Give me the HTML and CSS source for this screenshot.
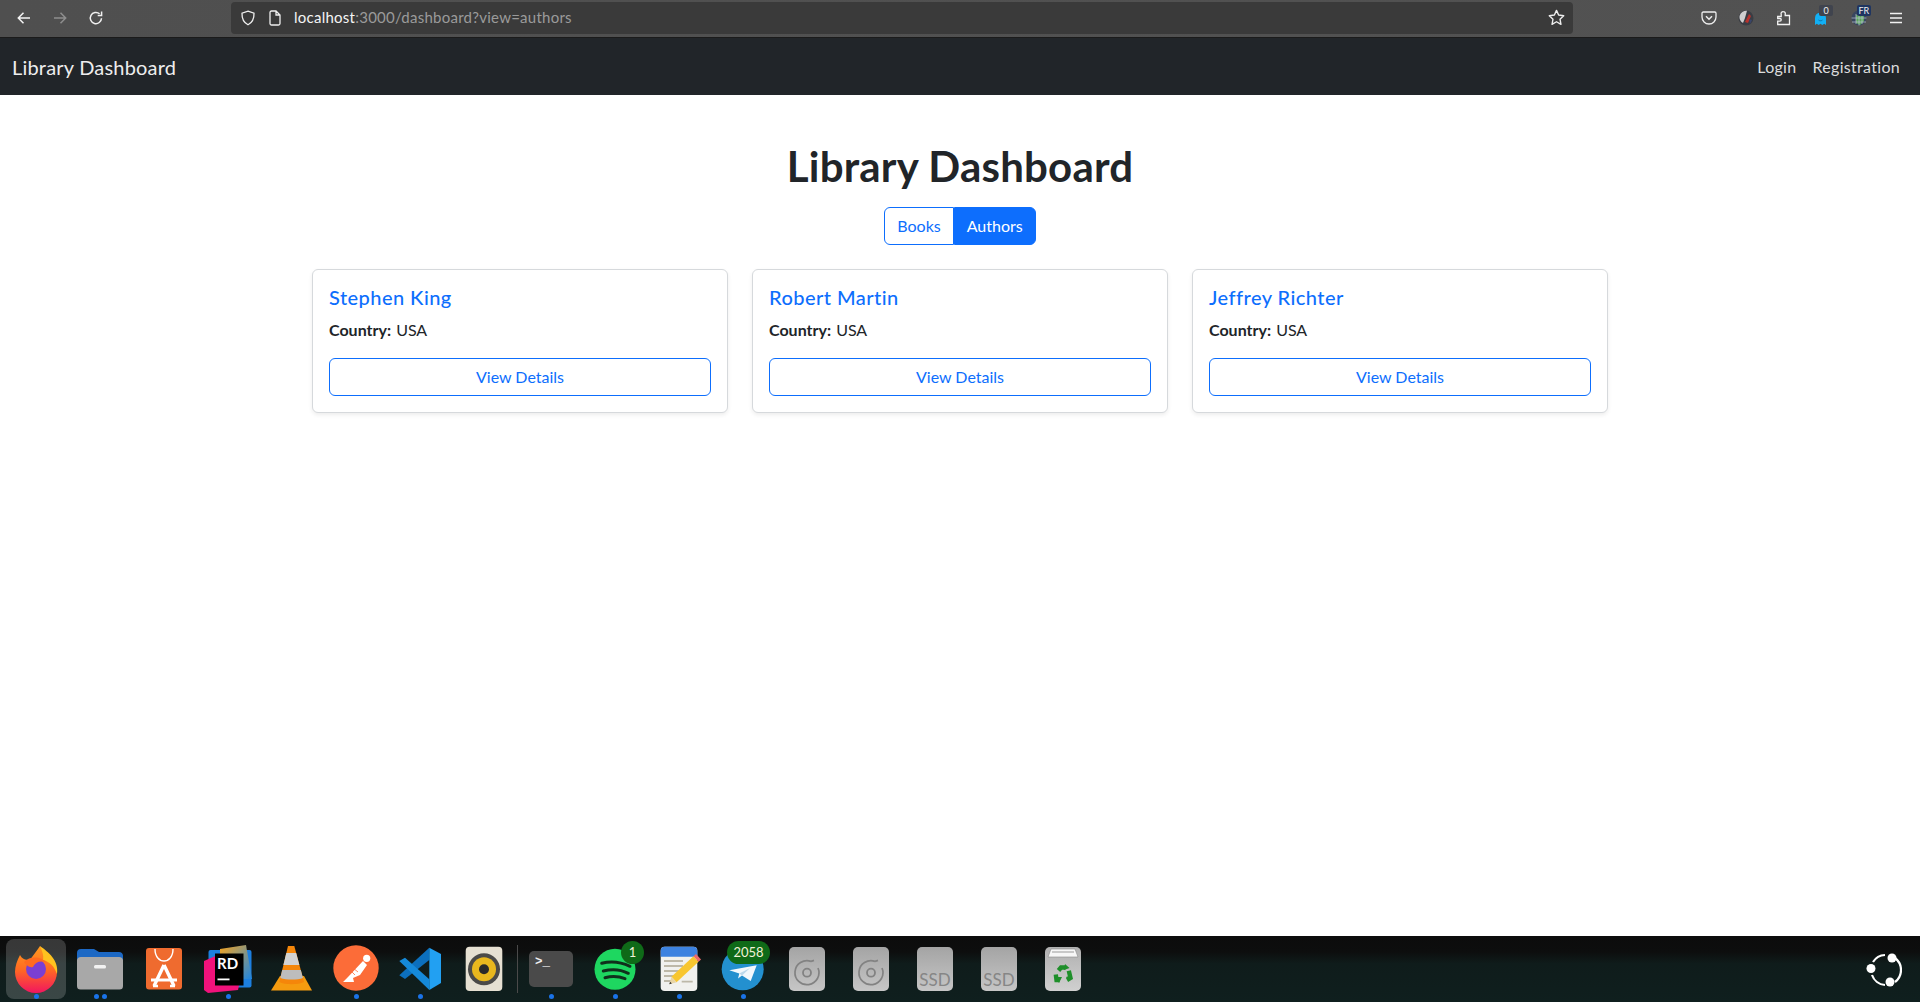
FILE: index.html
```html
<!DOCTYPE html>
<html lang="en">
<head>
<meta charset="utf-8">
<title>Library Dashboard</title>
<link rel="stylesheet" href="styles.css">
</head>
<body>
<div class="toolbar">
  <div class="nav-buttons">
    <svg class="tb-icon" viewBox="0 0 16 16"><path d="M14 8H2.500M7.500 2.800 2.300 8l5.200 5.200" fill="none" stroke="#f4f4f4" stroke-width="1.500"/></svg>
    <svg class="tb-icon" viewBox="0 0 16 16"><path d="M2 8h11.500M8.500 2.800 13.700 8l-5.200 5.200" fill="none" stroke="#8e8e8e" stroke-width="1.500"/></svg>
    <svg class="tb-icon" viewBox="0 0 16 16"><path d="M13.500 8.200A5.600 5.600 0 1 1 11.600 3.800M13.600 1.600v3.900H9.700" fill="none" stroke="#f0f0f0" stroke-width="1.500"/></svg>
  </div>
  <div class="urlbar">
    <svg class="url-icon" viewBox="0 0 16 16"><path d="M8 1.200 14 3.200c.2 5.400-1.900 9.400-6 11.600C3.900 12.600 1.800 8.600 2 3.200Z" fill="none" stroke="#eee" stroke-width="1.300"/></svg>
    <svg class="url-icon" viewBox="0 0 16 16"><path d="M3 2.500A1.500 1.500 0 0 1 4.500 1H9l4 4v8.500a1.500 1.500 0 0 1-1.500 1.500h-7A1.500 1.500 0 0 1 3 13.500ZM9 1v4h4" fill="none" stroke="#eee" stroke-width="1.300"/></svg>
    <span class="url-text"><span class="url-host">localhost</span>:3000/dashboard?view=authors</span>
    <svg class="star" viewBox="0 0 16 16"><path d="m8 1.300 2 4.400 4.800.6-3.500 3.300.9 4.800L8 12l-4.200 2.400.9-4.800L1.200 6.300 6 5.700Z" fill="none" stroke="#eee" stroke-width="1.300" stroke-linejoin="round"/></svg>
  </div>
  <div class="ext-icons">
    <svg class="ext" viewBox="0 0 16 16"><path d="M2.200 2h11.600c.7 0 1.200.5 1.200 1.200V7a7 7 0 0 1-14 0V3.200C1 2.500 1.500 2 2.200 2Z" fill="none" stroke="#eee" stroke-width="1.300"/><path d="m5 6.200 3 3 3-3" fill="none" stroke="#eee" stroke-width="1.500"/></svg>
    <svg class="ext" viewBox="0 0 16 16"><circle cx="8" cy="8" r="7.500" fill="#3a3d44"/><path d="M1.500 6A7 7 0 0 1 9 .8L7 8l-2 5a7 7 0 0 1-3.500-7Z" fill="#cfcfcf"/><path d="m7 12 4-8 2 2-3 7Z" fill="#b8322c"/><path d="M11 9l3 1-2 4Z" fill="#39456b"/></svg>
    <svg class="ext" viewBox="0 0 16 16"><path d="M1.700 6.500h3.500V4.300a2 2 0 0 1 2.100-2.700c1.500 0 2.300 1.200 1.900 2.700v1.200h4.300V14.500H1.700v-3.300h2.200a1.300 1.300 0 0 0 0-2.700H1.700Z" fill="none" stroke="#f2f2f2" stroke-width="1.300"/></svg>
    <div class="ext ext-badged">
      <svg class="ext-fill" viewBox="0 0 16 16"><path d="M2 15V8a5.500 5.500 0 0 1 11 0v7l-1.800-1.300L9.300 15l-1.800-1.300L5.700 15l-1.900-1.300Z" fill="#12b0f5"/><path d="M5.500 10c1 1 3 1 4 0" fill="none" stroke="#0a6fa8" stroke-width="1"/></svg>
      <span class="ext-badge">0</span>
    </div>
    <div class="ext ext-badged">
      <svg class="ext-fill" viewBox="0 0 16 16"><circle cx="8" cy="8" r="7.500" fill="#39465f"/><path d="M5 5h8v6l-4 4-4-2Z" fill="#5aa35a"/><path d="M.5 8h15M8 .5v15M5 4v10M11 4v10M1 12h14" stroke="#b9c4d4" stroke-width=".7"/></svg>
      <span class="ext-badge ext-badge-fr">FR</span>
    </div>
    <svg class="ext" viewBox="0 0 16 16"><path d="M2 3.500h12M2 8h12M2 12.500h12" stroke="#f2f2f2" stroke-width="1.400"/></svg>
  </div>
</div>

<nav class="navbar">
  <a class="brand">Library Dashboard</a>
  <div class="nav-links">
    <a class="nav-link">Login</a>
    <a class="nav-link">Registration</a>
  </div>
</nav>

<main class="main">
  <h1 class="title">Library Dashboard</h1>
  <div class="btn-group">
    <button class="tab">Books</button>
    <button class="tab tab-active">Authors</button>
  </div>
  <div class="cards">
    <article class="card">
      <h5 class="card-title">Stephen King</h5>
      <p class="card-text"><strong>Country:</strong> USA</p>
      <button class="details">View Details</button>
    </article>
    <article class="card">
      <h5 class="card-title">Robert Martin</h5>
      <p class="card-text"><strong>Country:</strong> USA</p>
      <button class="details">View Details</button>
    </article>
    <article class="card">
      <h5 class="card-title">Jeffrey Richter</h5>
      <p class="card-text"><strong>Country:</strong> USA</p>
      <button class="details">View Details</button>
    </article>
  </div>
</main>

<footer class="dock">
  <div class="dock-item dock-item-active">
    <svg class="app" viewBox="0 0 52 52">
      <defs><linearGradient id="ff" x1="0" y1="0" x2="0" y2="1"><stop offset="0" stop-color="#ff9a1f"/><stop offset=".5" stop-color="#ff6a22"/><stop offset="1" stop-color="#f2155f"/></linearGradient></defs>
      <path d="M5 30C5 24 7 19 10 13 12 17 15 18 20 18 23 13 27 9 30 4 34 10 44 15 47 30A21 21 0 0 1 5 30Z" fill="url(#ff)"/>
      <path d="M30 4C38 10 49 18 47 32 44 24 40 20 33 18 34 13 32 9 30 4Z" fill="#ffc21f"/>
      <circle cx="26" cy="27" r="10" fill="#7a3fd2"/>
      <path d="M14 20C20 14 31 14 37 21 31 18 25 20 23 25 19 26 16 23 14 20Z" fill="#ff6b1f"/>
    </svg>
    <span class="dots"><i class="dot"></i></span>
  </div>
  <div class="dock-item">
    <svg class="app" viewBox="0 0 52 52"><path d="M3 11a4 4 0 0 1 4-4h13l5 3h20a4 4 0 0 1 4 3.500V24H3Z" fill="#1c68c4"/><path d="M3 18a4 4 0 0 1 4-3h38a4 4 0 0 1 4 3v26a3.500 3.500 0 0 1-3.500 3.500h-39A3.500 3.500 0 0 1 3 44Z" fill="#a8a8a8"/><rect x="20" y="23" width="12" height="3.400" rx="1.500" fill="#f2f2f2"/></svg>
    <span class="dots"><i class="dot"></i><i class="dot"></i></span>
  </div>
  <div class="dock-item">
    <svg class="app" viewBox="0 0 52 52"><rect x="8" y="6" width="36" height="41.500" rx="3" fill="#ef6b2f"/><path d="M17 7c0 16 18 16 18 0" fill="none" stroke="#fff" stroke-width="1.400"/><path d="M26 23 16 44M26 23 36 44" fill="none" stroke="#fff" stroke-width="3.400"/><path d="M13 38h26" stroke="#fff" stroke-width="3"/><path d="M15 44h5M32 44h5" stroke="#fff" stroke-width="2.500"/></svg>
    <span class="dots"></span>
  </div>
  <div class="dock-item">
    <svg class="app" viewBox="0 0 52 52"><defs><linearGradient id="rdy" x1="0" y1="0" x2="1" y2="1"><stop offset="0" stop-color="#f7a41d"/><stop offset="1" stop-color="#1c86e4"/></linearGradient></defs><rect x="6.500" y="8" width="43" height="37.500" rx="2" fill="#1c7fe0"/><path d="M18 7 44 3l6 34H30L18 16Z" fill="url(#rdy)"/><path d="M2 19 18 12l22 18-4 18-30 3-4-3Z" fill="#f0127b"/><rect x="13" y="11.500" width="28.500" height="32" fill="#000"/><text class="rd-text" x="15" y="26.500">RD</text><rect x="15.500" y="36.500" width="12" height="1.800" fill="#fff"/></svg>
    <span class="dots"><i class="dot"></i></span>
  </div>
  <div class="dock-item">
    <svg class="app" viewBox="0 0 52 52"><path d="M14 34 5 48.500h41L38 34Z" fill="#f59b0f"/><path d="M22 4h6.300L38 40c-6 3-19 3-24.700 0Z" fill="#f5860a"/><path d="M20.300 11h9.900l3.200 12H17.400Z" fill="#d2d2d2"/><path d="M16.200 28h18.600l2.200 8c-6 2-16 2-22.700 0Z" fill="#bdbdbd"/></svg>
    <span class="dots"></span>
  </div>
  <div class="dock-item">
    <svg class="app" viewBox="0 0 52 52"><circle cx="26" cy="26" r="22.700" fill="#fc6c38"/><circle cx="36.700" cy="16.300" r="3.600" fill="#fff"/><path d="M33 19 37 23 30 33 23 36 24 40H13L18 35Z" fill="#fff"/><path d="M23 26 28 30M21 29 25 33" stroke="#fc6c38" stroke-width=".8"/></svg>
    <span class="dots"><i class="dot"></i></span>
  </div>
  <div class="dock-item">
    <svg class="app" viewBox="0 0 52 52"><path d="M5.300 33.300 11 37 35.300 18V5.700Z" fill="#0c6fbd"/><path d="M5.300 19 11 15.700 35.300 37.300V48Z" fill="#1589da"/><path d="M35.300 5.700 47 12V41L35.300 48Z" fill="#22a0f2"/></svg>
    <span class="dots"><i class="dot"></i></span>
  </div>
  <div class="dock-item">
    <svg class="app" viewBox="0 0 52 52"><rect x="7.700" y="4.700" width="36.600" height="44.300" rx="4" fill="#e6e0d2"/><circle cx="26" cy="27.300" r="16" fill="#4b4a48"/><circle cx="26" cy="27.300" r="12" fill="#e8b71e"/><circle cx="26" cy="27.300" r="5" fill="#2a2a2a"/></svg>
    <span class="dots"></span>
  </div>
  <div class="dock-sep"></div>
  <div class="dock-item">
    <div class="terminal"><span class="term-text">&gt;_</span></div>
    <span class="dots"><i class="dot"></i></span>
  </div>
  <div class="dock-item">
    <svg class="app" viewBox="0 0 52 52"><circle cx="26" cy="27.300" r="20.500" fill="#1ed760"/><path d="M12.700 21.300C22 18.800 32 20 41 24.300M14.300 29C22 27 32 27.500 39.300 31.300M16 35.700C23 34 30 34.400 36 36.700" fill="none" stroke="#10301c" stroke-width="3" stroke-linecap="round"/></svg>
    <span class="badge badge-small">1</span>
    <span class="dots"><i class="dot"></i></span>
  </div>
  <div class="dock-item">
    <svg class="app" viewBox="0 0 52 52"><rect x="7.700" y="4.700" width="36.600" height="44.300" rx="4" fill="#f1f1ee"/><path d="M7.700 14.700V8.700a4 4 0 0 1 4-4h28.600a4 4 0 0 1 4 4v6Z" fill="#3d82e0"/><path d="M11 19h19M11 24h19M11 29h15M11 34h11M11 39h7M28.700 39.700h11" stroke="#bdb8a8" stroke-width="1.800"/><path d="M21 37.500 43 17" stroke="#f8c62f" stroke-width="7.500"/><path d="M43 17 45.500 14.700" stroke="#ec6a6a" stroke-width="7.500"/><path d="m16.300 42.300 2.200-7.500 5.200 5.400Z" fill="#e9d5a5"/><path d="m16.300 42.300.8-2.600 1.800 1.800Z" fill="#333"/></svg>
    <span class="dots"><i class="dot"></i></span>
  </div>
  <div class="dock-item">
    <svg class="app" viewBox="0 0 52 52"><circle cx="25.700" cy="27.300" r="21" fill="#2390cf"/><path d="M12.300 28.300 39.700 23.300 33.700 39 25 33.500 21 36.500 22.300 31.500Z" fill="#f2f8fc"/><path d="M22.300 31.500 33 26 25 33.500Z" fill="#bcd9ec"/></svg>
    <span class="badge badge-wide">2058</span>
    <span class="dots"><i class="dot"></i></span>
  </div>
  <div class="dock-item">
    <div class="drive"><svg class="disc" viewBox="0 0 36 44"><path d="M22 14.400A12 12 0 1 0 29 21M22 14.400l3-1" fill="none" stroke="#828282" stroke-width="1.700"/><circle cx="18" cy="25.700" r="4" fill="none" stroke="#828282" stroke-width="1.800"/></svg></div>
    <span class="dots"></span>
  </div>
  <div class="dock-item">
    <div class="drive"><svg class="disc" viewBox="0 0 36 44"><path d="M22 14.400A12 12 0 1 0 29 21M22 14.400l3-1" fill="none" stroke="#828282" stroke-width="1.700"/><circle cx="18" cy="25.700" r="4" fill="none" stroke="#828282" stroke-width="1.800"/></svg></div>
    <span class="dots"></span>
  </div>
  <div class="dock-item">
    <div class="drive drive-ssd"><span class="ssd">SSD</span></div>
    <span class="dots"></span>
  </div>
  <div class="dock-item">
    <div class="drive drive-ssd"><span class="ssd">SSD</span></div>
    <span class="dots"></span>
  </div>
  <div class="dock-item">
    <div class="drive drive-trash">
      <svg class="disc" viewBox="0 0 36 44"><path d="M6 2h24l3 8H3Z" fill="#f6f6f6" stroke="#8a8a8a" stroke-width=".6"/><path d="M7 5h22" stroke="#9a9a9a" stroke-width="1"/><g fill="none" stroke="#1e8f2a" stroke-width="4.400"><path d="M13.500 23.500 16 20.500h4.500"/><path d="M23.800 23.700 25.500 31 22 33"/><path d="M14.500 33H11.500L10.800 27.500"/></g><path d="m20 17 4.500 4-5.500 2ZM27 28l-3 5.500-3-3.500ZM14 36l-3.500-6 6.500 0Z" fill="#1e8f2a"/></svg>
    </div>
    <span class="dots"></span>
  </div>
  <div class="dock-spacer"></div>
  <svg class="ubuntu" viewBox="0 0 36 36"><path d="M29 6A15 15 0 0 1 29 30M7 10A15 15 0 0 1 19 3M6 23A15 15 0 0 0 19 33" fill="none" stroke="#fff" stroke-width="2.200"/><circle cx="26" cy="6" r="4.500" fill="#fff"/><circle cx="5" cy="16.500" r="4.500" fill="#fff"/><circle cx="24" cy="30" r="4.500" fill="#fff"/></svg>
</footer>
</body>
</html>
```
FILE: styles.css
```css
* { box-sizing: border-box; }
html, body { margin: 0; height: 100%; }
body {
  display: flex;
  flex-direction: column;
  height: 1002px;
  overflow: hidden;
  background: #fff;
  color: #212529;
  font-family: "Lato", "Open Sans", sans-serif;
  font-size: 16px;
}

/* browser chrome */
.toolbar {
  height: 38px;
  flex: none;
  display: flex;
  align-items: center;
  padding: 0 16px 2px 16px;
  background: linear-gradient(90deg, #4f4f4f, #525252);
  border-bottom: 1px solid #1b1b1b;
}
.nav-buttons { display: flex; gap: 20px; width: 215px; flex: none; }
.tb-icon { width: 16px; height: 16px; }
.urlbar {
  width: 1342px;
  height: 32px;
  flex: none;
  display: flex;
  align-items: center;
  padding: 0 8px 0 9px;
  gap: 11px;
  background: #3a3a3a;
  border-radius: 4px;
}
.url-icon { width: 16px; height: 16px; flex: none; }
.url-text { flex: 1; font-size: 15px; line-height: 18px; padding-bottom: 1px; letter-spacing: .25px; color: #9a9a9a; }
.url-host { color: #f4f4f4; }
.star { width: 17px; height: 17px; flex: none; }
.ext-icons {
  flex: 1;
  display: flex;
  justify-content: flex-end;
  align-items: center;
  gap: 21.5px;
}
.ext { width: 16px; height: 16px; flex: none; }
.ext-badged { position: relative; }
.ext-fill { display: block; width: 16px; height: 16px; }
.ext-badge {
  position: absolute;
  top: -5px;
  left: 6px;
  min-width: 14px;
  padding: 0 2px;
  border-radius: 2px;
  background: #40444e;
  color: #eee;
  font-size: 9px;
  line-height: 11px;
  text-align: center;
}
.ext-badge-fr { background: #1f3560; }

/* navbar */
.navbar {
  height: 57px;
  flex: none;
  display: flex;
  align-items: center;
  justify-content: space-between;
  padding: 0 20px 0 12px;
  background: #212529;
}
.brand { color: #fff; font-size: 20px; letter-spacing: .2px; opacity: .92; }
.nav-links { display: flex; gap: 16px; }
.nav-link { color: rgba(255, 255, 255, .85); font-size: 16px; letter-spacing: .3px; }

/* main */
.main {
  flex: 1;
  display: flex;
  flex-direction: column;
  align-items: center;
  padding-top: 48px;
}
.title {
  margin: 0 0 16px;
  font-size: 42px;
  line-height: 47px;
  letter-spacing: .2px;
  font-weight: 700;
}
.btn-group { display: flex; margin: 1px 0 24px; }
.tab {
  height: 38px;
  padding: 0 12px 2px;
  border: 1px solid #0d6efd;
  background: #fff;
  color: #0d6efd;
  font: inherit;
  border-radius: 6px 0 0 6px;
}
.tab-active {
  background: #0d6efd;
  color: #fff;
  border-radius: 0 6px 6px 0;
}
.cards {
  width: 1296px;
  display: grid;
  grid-template-columns: repeat(3, 416px);
  gap: 24px;
}
.card {
  height: 144px;
  padding: 16px;
  border: 1px solid #d6d9dc;
  border-radius: 6px;
  background: #fff;
  box-shadow: 0 2px 4px rgba(0, 0, 0, .075);
  display: flex;
  flex-direction: column;
}
.card-title {
  margin: 0 0 10px;
  color: #0d6efd;
  font-size: 20px;
  line-height: 22px;
  letter-spacing: .45px;
  font-weight: 500;
}
.card-text { margin: 0 0 16px; line-height: 24px; word-spacing: 1px; }
.details {
  height: 38px;
  flex: none;
  padding: 0 0 2px;
  border: 1px solid #0d6efd;
  border-radius: 6px;
  background: #fff;
  color: #0d6efd;
  font: inherit;
}

/* dock */
.dock {
  height: 66px;
  flex: none;
  display: flex;
  padding-left: 4px;
  background: linear-gradient(180deg, #0c0c0c 0, #0d0e0e 24%, #0f1c1b 42%, #0f1f1e 100%);
}
.dock-item {
  position: relative;
  width: 64px;
  height: 66px;
  flex: none;
  display: flex;
  align-items: center;
  justify-content: center;
  padding-bottom: 2px;
}
.dock-item-active::before {
  content: "";
  position: absolute;
  left: 2px;
  right: 2px;
  top: 3px;
  bottom: 3px;
  border-radius: 8px;
  background: rgba(255, 255, 255, .18);
}
.app { position: relative; width: 52px; height: 52px; }
.dots {
  position: absolute;
  left: 0;
  right: 0;
  bottom: 3px;
  display: flex;
  justify-content: center;
  gap: 3px;
}
.dot {
  width: 5px;
  height: 5px;
  border-radius: 50%;
  background: #1a73e8;
}
.dock-sep {
  width: 1px;
  height: 48px;
  margin: 9px 1px 0 1px;
  flex: none;
  background: #4a4a4a;
}
.rd-text { fill: #fff; font-family: "Lato", sans-serif; font-weight: 700; font-size: 15px; }
.terminal {
  width: 44px;
  height: 36px;
  margin-top: 2px;
  padding: 4px 6px;
  border-radius: 5px;
  background: #4a4a4a;
}
.term-text { display: block; color: #eee; font-family: "Liberation Mono", monospace; font-size: 12.500px; font-weight: 700; line-height: 14px; }
.badge {
  position: absolute;
  top: 5px;
  height: 23px;
  border-radius: 12px;
  background: #0f6a18;
  color: #f2f2d8;
  font-size: 13px;
  line-height: 23px;
  text-align: center;
}
.badge-small { left: 38px; width: 23px; }
.badge-wide { left: 16px; width: 43px; }
.drive {
  width: 36px;
  height: 44px;
  margin-top: 2px;
  display: flex;
  border-radius: 5px;
  background: linear-gradient(#a4a4a4, #c6c6c6);
}
.disc { display: block; width: 36px; height: 44px; }
.drive-ssd { align-items: flex-end; justify-content: center; overflow: hidden; }
.ssd { color: #868686; font-size: 17px; line-height: 18px; margin-bottom: 2px; white-space: nowrap; }
.drive-trash { background: linear-gradient(#b0b0b0, #d0d0d0); }
.dock-spacer { flex: 1; }
.ubuntu { width: 36px; height: 36px; flex: none; margin: 16px 18px 0 0; }
```
